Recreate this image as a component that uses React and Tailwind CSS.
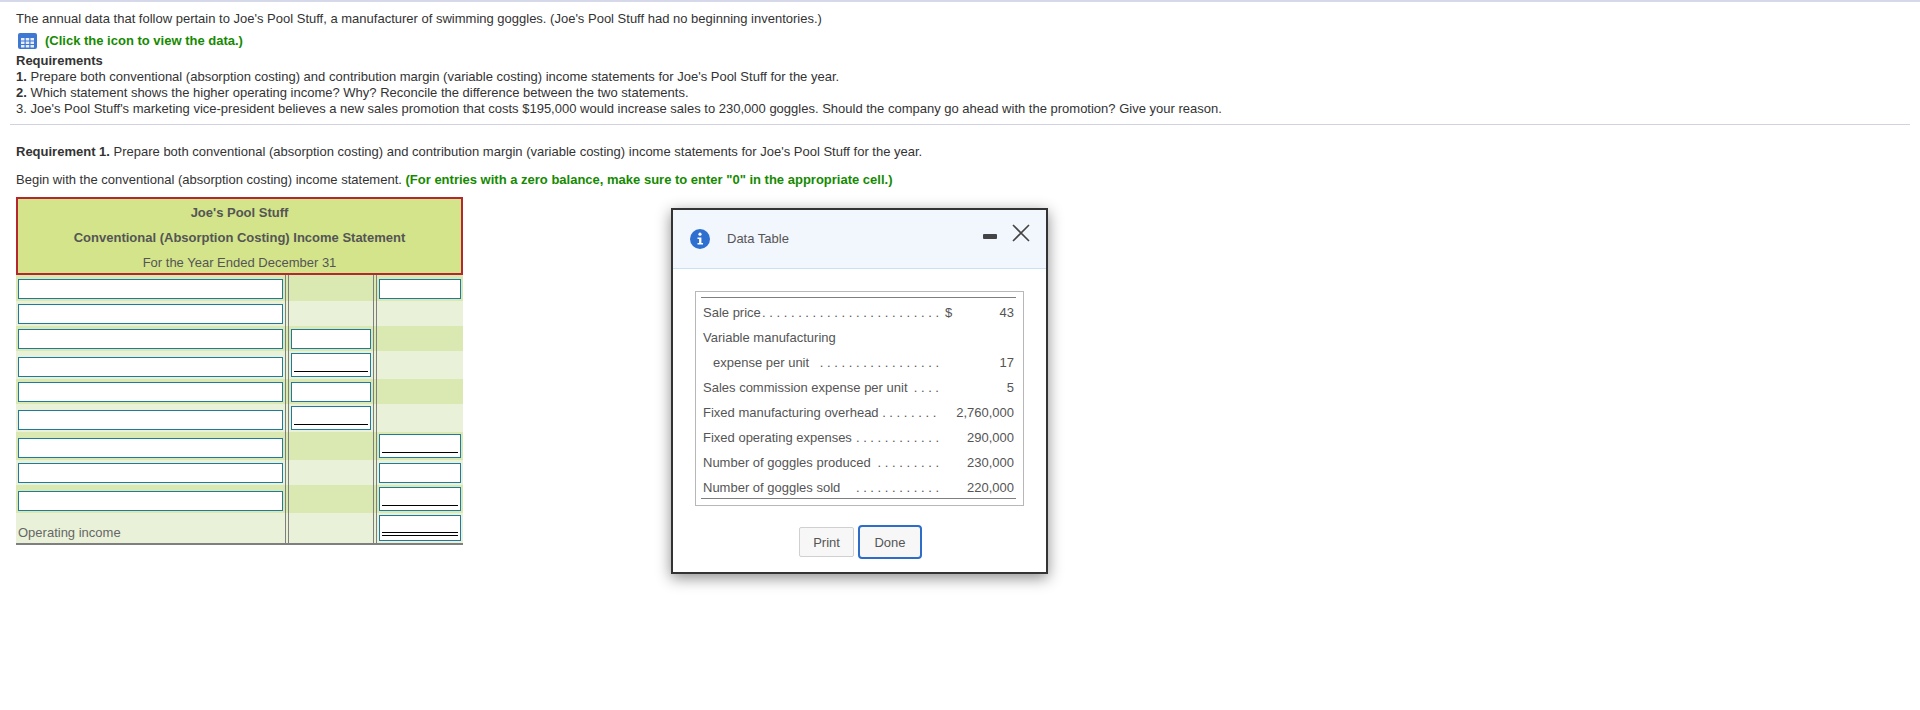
import React from 'react'

const rows = [
  { h: 'h-[26px]', first: true, col2: null, col3: 'plain' },
  { h: 'h-[25px]', first: true, col2: null, col3: null },
  { h: 'h-[25px]', first: true, col2: 'plain', col3: null },
  { h: 'h-[28px]', first: true, col2: 'single', col3: null },
  { h: 'h-[25px]', first: true, col2: 'plain', col3: null },
  { h: 'h-[28px]', first: true, col2: 'single', col3: null },
  { h: 'h-[28px]', first: true, col2: null, col3: 'single' },
  { h: 'h-[25px]', first: true, col2: null, col3: 'plain' },
  { h: 'h-[28px]', first: true, col2: null, col3: 'single' },
  { h: 'h-[30px]', first: false, col2: null, col3: 'double' },
]

const dataRows = [
  { label: 'Sale price', dots: 25, sign: '$', value: '43' },
  { label: 'Variable manufacturing' },
  { label: 'expense per unit', indent: true, dots: 17, value: '17' },
  { label: 'Sales commission expense per unit', dots: 4, value: '5' },
  { label: 'Fixed manufacturing overhead', dots: 8, value: '2,760,000' },
  { label: 'Fixed operating expenses', dots: 12, value: '290,000' },
  { label: 'Number of goggles produced', dots: 9, value: '230,000' },
  { label: 'Number of goggles sold', dots: 12, value: '220,000' },
]

function Entry({ kind, className }) {
  if (!kind) return null
  const high = kind !== 'plain'
  return (
    <div className={`${className} ${kind === 'double' ? 'h-[26px]' : high ? 'h-6' : 'h-5'} border border-[#1f7a9e] bg-white px-[2px] flex flex-col justify-end pb-[4px]`}>
      {high && <div className="border-b border-black" />}
      {kind === 'double' && <div className="border-b border-black mt-[2px]" />}
    </div>
  )
}

function GridIcon() {
  const cells = []
  for (const y of [5, 8.5, 12]) {
    for (const x of [3, 7.75, 12.5]) {
      cells.push(<rect key={`${x}-${y}`} x={x} y={y} width="3.5" height="2.5" fill="#e8effb" />)
    }
  }
  return (
    <svg width="19" height="16" viewBox="0 0 19 16" className="shrink-0">
      <rect width="19" height="16" rx="2" fill="#3f78d2" />
      {cells}
    </svg>
  )
}

export default function App() {
  return (
    <div className="relative h-[710px] w-[1920px] bg-white text-[13px] text-[#333] font-['Liberation_Sans',Arial,sans-serif] border-t-2 border-[#d5d8e8]">
      <div className="px-4 pt-[9px]">
        <p className="leading-4 h-[16px]">The annual data that follow pertain to Joe's Pool Stuff, a manufacturer of swimming goggles. (Joe's Pool Stuff had no beginning inventories.)</p>
        <div className="mt-[5px] flex items-center gap-[8px] pl-[2px] h-[17px] font-bold text-[#158a00]">
          <GridIcon />
          <span>(Click the icon to view the data.)</span>
        </div>
        <div className="mt-[4px] leading-4">
          <p className="font-bold">Requirements</p>
          <p><b>1.</b> Prepare both conventional (absorption costing) and contribution margin (variable costing) income statements for Joe's Pool Stuff for the year.</p>
          <p><b>2.</b> Which statement shows the higher operating income? Why? Reconcile the difference between the two statements.</p>
          <p>3. Joe's Pool Stuff's marketing vice-president believes a new sales promotion that costs $195,000 would increase sales to 230,000 goggles. Should the company go ahead with the promotion? Give your reason.</p>
        </div>
      </div>
      <div className="ml-[10px] mr-[10px] mt-[7px] border-t border-[#d0d2e0]" />
      <div className="px-4">
        <p className="mt-[19px] leading-4"><b>Requirement 1.</b> Prepare both conventional (absorption costing) and contribution margin (variable costing) income statements for Joe's Pool Stuff for the year.</p>
        <p className="mt-[12px] leading-4">Begin with the conventional (absorption costing) income statement. <b className="text-[#158a00]">(For entries with a zero balance, make sure to enter "0" in the appropriate cell.)</b></p>

        <div className="mt-[9px] w-[447px] border-b-2 border-[#7f7f7f] text-[#555]">
          <div className="h-[78px] border-2 border-[#b5272f] bg-[#d3e48a] flex flex-col items-center pt-[1px] leading-[25px]">
            <p className="font-bold">Joe's Pool Stuff</p>
            <p className="font-bold">Conventional (Absorption Costing) Income Statement</p>
            <p>For the Year Ended December 31</p>
          </div>
          {rows.map((row, i) => (
            <div key={i} className={`${row.h} ${i % 2 === 0 ? 'bg-[#dae8b1]' : 'bg-[#e9f2d9]'} flex`}>
              <div className="w-[269px] flex items-end px-[2px] pb-[2px]">
                {row.first
                  ? <div className="h-5 w-[265px] border border-[#1f7a9e] bg-white" />
                  : <span className="leading-4 text-[#666]">Operating income</span>}
              </div>
              <div className="w-[92px] flex items-end border-x-4 border-double border-[#7f7f7f] px-[2px] pb-[2px]">
                <Entry kind={row.col2} className="w-[80px]" />
              </div>
              <div className="w-[86px] flex items-end pb-[2px] pl-[2px]">
                <Entry kind={row.col3} className="w-[82px]" />
              </div>
            </div>
          ))}
        </div>
      </div>

      {/* floating data window */}
      <div className="absolute left-[671px] top-[206px] w-[377px] h-[366px] border-2 border-[#333] bg-white shadow-[0_4px_14px_rgba(0,0,0,0.45)] text-[#555]">
        <div className="relative h-[59px] bg-[#f2f6fd] border-b border-[#c9e0f5] flex items-center pl-[17px]">
          <svg width="20" height="20" viewBox="0 0 20 20" className="shrink-0">
            <circle cx="10" cy="10" r="10" fill="#2f6fd0" />
            <circle cx="10" cy="5.2" r="1.6" fill="#fff" />
            <path d="M7.5 8.4H11.4V14H13V15.6H7.5V14H9.1V10H7.5Z" fill="#fff" />
          </svg>
          <span className="ml-[17px] text-[#555]">Data Table</span>
          <div className="absolute left-[310px] top-[24px] h-[5px] w-[14px] rounded-[1px] bg-[#444]" />
          <svg width="18" height="18" viewBox="0 0 18 18" className="absolute left-[339px] top-[14px]">
            <path d="M1 1L17 17M17 1L1 17" stroke="#444" strokeWidth="1.6" />
          </svg>
        </div>
        <div className="mx-[22px] mt-[22px] h-[215px] border border-[#b8b8b8] pl-[5px] pr-[7px] pt-[5px]">
          <div className="h-[202px] border-y border-[#7f7f7f]">
            {dataRows.map((r, i) => (
              <div key={i} className="h-[25px] pt-[5px] flex items-center whitespace-nowrap">
                <div className="w-[238px] flex pl-[2px]">
                  <span className={r.indent ? 'pl-[10px]' : ''}>{r.label}</span>
                  {r.dots && <span className="flex-1 overflow-hidden text-right">{'. '.repeat(r.dots).trim()}</span>}
                </div>
                <span className="w-[20px] pl-[6px]">{r.sign}</span>
                <span className="flex-1 text-right pr-[2px]">{r.value}</span>
              </div>
            ))}
          </div>
        </div>
        <div className="mt-[19px] flex items-center gap-[4px] pl-[126px]">
          <button className="h-[30px] w-[55px] rounded-[2px] border border-[#d0d0d0] bg-[#f7f7f7] pt-[1px] text-[#555]">Print</button>
          <button className="h-[34px] w-[64px] rounded-[4px] border-2 border-[#2d6cc8] bg-[#f7f7f7] pt-[1px] text-[#555]">Done</button>
        </div>
      </div>
    </div>
  )
}
